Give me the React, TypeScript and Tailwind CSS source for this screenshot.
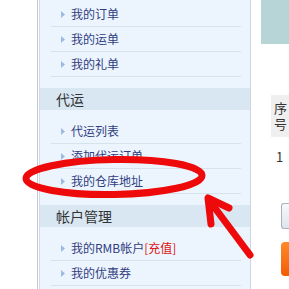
import React from 'react';

type Item = { label: string; extra?: string };

const sections: { title?: string; items: Item[] }[] = [
  { items: [{ label: '我的订单' }, { label: '我的运单' }, { label: '我的礼单' }] },
  { title: '代运', items: [{ label: '代运列表' }, { label: '添加代运订单' }, { label: '我的仓库地址' }] },
  { title: '帐户管理', items: [{ label: '我的RMB帐户', extra: '[充值]' }, { label: '我的优惠券' }] },
];

const Bullet = () => (
  <svg width="4" height="7" viewBox="0 0 4 7" className="shrink-0">
    <path d="M0 0 L4 3.5 L0 7 Z" fill="#9dbbe2" />
  </svg>
);

export default function App() {
  return (
    <div
      className="relative w-[289px] h-[289px] overflow-hidden bg-white flex"
      style={{ fontFamily: '"Noto Sans CJK SC", "Liberation Sans", sans-serif' }}
    >
      {/* left gutter */}
      <div className="w-[38px] shrink-0 border-r border-[#c4c9cf]" />
      <div className="w-[2px] shrink-0 border-r border-[#d3dce5] bg-white" />

      {/* sidebar */}
      <div className="w-[211px] shrink-0 bg-[#ecf5fd] border-r border-[#cdd5dd] pt-[2px]">
        {sections.map((s, i) => (
          <div key={i}>
            {s.title && (
              <div className="h-[22px] bg-[#d9e7f3] flex items-center pl-[16px] text-[14px] text-[#333333] leading-none">
                {s.title}
              </div>
            )}
            <ul className={`${s.title ? 'pt-[9px]' : ''} pb-[11px]`}>
              {s.items.map((it) => (
                <li
                  key={it.label}
                  className="h-[25px] ml-[11px] mr-[9px] border-b border-[#d6e2ec] flex items-center gap-[6px] pl-[10px] text-[12px] text-[#313d82] leading-none"
                >
                  <Bullet />
                  <span className="whitespace-nowrap">
                    {it.label}
                    {it.extra && <span className="text-[#dd1111]">{it.extra}</span>}
                  </span>
                </li>
              ))}
            </ul>
          </div>
        ))}
      </div>

      {/* main content edge */}
      <div className="flex-1 flex flex-col">
        <div className="ml-[10px] h-[44px] bg-[#b7d5d7]" />
        <div className="ml-[20px] mt-[51px] h-[42px] bg-[#efefef] flex items-center pl-[3px] text-[13px] leading-[16px] text-[#333]">
          <span className="w-[14px] break-all">序号</span>
        </div>
        <div className="ml-[25px] mt-[13px] text-[13px] leading-none text-[#333]">1</div>
        <div className="ml-[30px] mt-[40px] h-[26px] rounded-l-[3px] border border-r-0 border-[#a9b4c0] bg-gradient-to-b from-[#f7f9fb] to-[#dfe5eb]" />
        <div className="ml-[30px] mt-[13px] h-[34px] rounded-l-[4px] bg-gradient-to-b from-[#ff8a2a] to-[#f25c00]" />
      </div>

      {/* red hand annotation */}
      <svg className="absolute inset-0 pointer-events-none" width="289" height="289" viewBox="0 0 289 289">
        <ellipse cx="114" cy="177" rx="88" ry="17.5" fill="none" stroke="#ee0a0a" strokeWidth="7" transform="rotate(-1 114 177)" />
        <g stroke="#ee0a0a" strokeWidth="7" strokeLinecap="round" strokeLinejoin="round" fill="none">
          <path d="M250 255 L209 200" />
          <path d="M229 208 L208 198 L211 224" />
        </g>
      </svg>
    </div>
  );
}
